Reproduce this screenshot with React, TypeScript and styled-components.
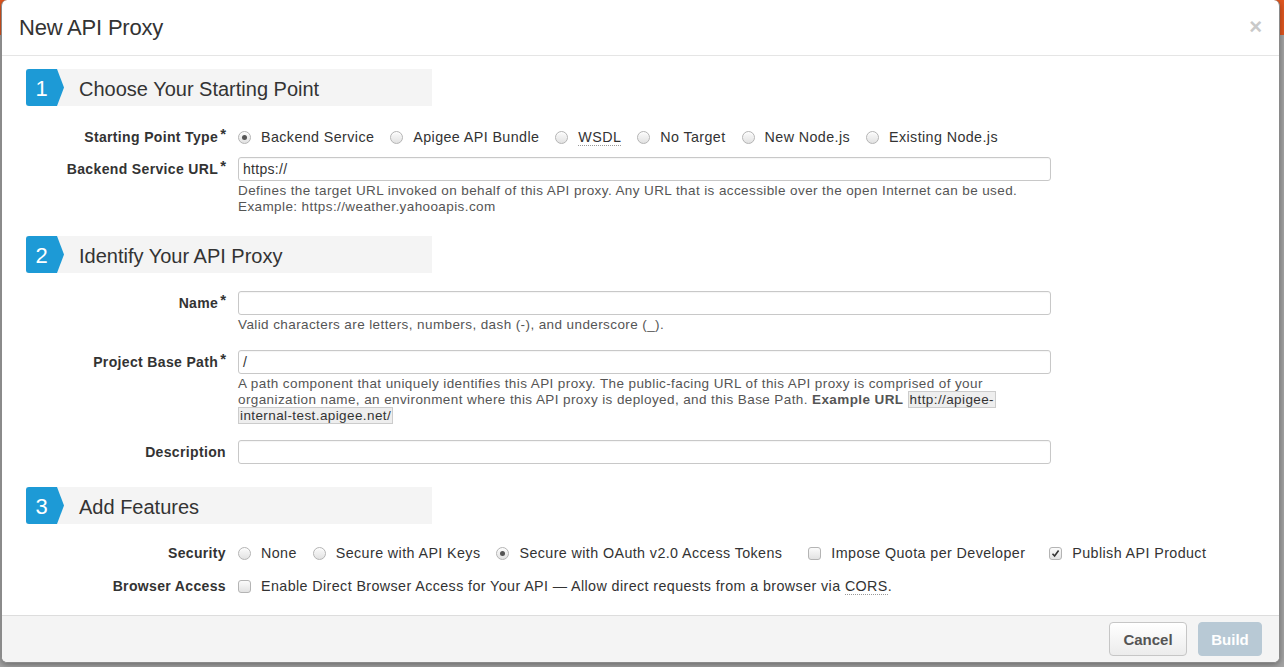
import React from "react";
import styled, { createGlobalStyle } from "styled-components";

const Global = createGlobalStyle`
  html, body { margin: 0; padding: 0; }
  body {
    font-family: "Liberation Sans", Arial, Helvetica, sans-serif;
    color: #333;
    background: #9d9d9d;
  }
`;

const Backdrop = styled.div`
  width: 1284px;
  height: 667px;
  padding-left: 1px;
  box-sizing: border-box;
  background: linear-gradient(#e0561f 0, #e0561f 35px, #a4a4a4 35px);
  overflow: hidden;
`;

const Modal = styled.div`
  width: 1279px;
  height: 663px;
  box-sizing: border-box;
  background: #fff;
  border: 1px solid #8a8a8a;
  border-top: none;
  border-radius: 6px;
  box-shadow: 0 2px 6px rgba(0, 0, 0, 0.35);
  display: flex;
  flex-direction: column;
  overflow: hidden;
`;

const Header = styled.div`
  height: 55px;
  flex: none;
  border-bottom: 1px solid #e5e5e5;
  display: flex;
  align-items: center;
  justify-content: space-between;
  padding: 0 17px 0 17px;
`;

const Title = styled.h3`
  margin: 0;
  font-size: 22px;
  font-weight: normal;
  color: #333;
  letter-spacing: -0.2px;
`;

const Close = styled.span`
  font-size: 22px;
  font-weight: bold;
  color: #c9c9c9;
  line-height: 1;
  margin-top: -2px;
`;

const Body = styled.div`
  flex: 1;
  padding: 13px 24px 0;
`;

const SectionHeader = styled.div<{ $mb: number }>`
  width: 406px;
  height: 37px;
  background: #f4f4f4;
  display: flex;
  align-items: center;
  margin-bottom: ${(p) => p.$mb}px;
`;

const Badge = styled.div`
  width: 38px;
  height: 37px;
  background: #1d9ad6;
  color: #fff;
  font-size: 22px;
  line-height: 35px;
  padding-top: 2px;
  box-sizing: border-box;
  padding-right: 7px;
  text-align: center;
  border-radius: 3px 0 0 3px;
  clip-path: polygon(0 0, 31px 0, 38px 50%, 31px 100%, 0 100%);
`;

const SectionTitle = styled.span`
  margin: 3px 0 0 15px;
  font-size: 20px;
  color: #333;
`;

const Row = styled.div<{ $mb: number; $h?: number }>`
  display: grid;
  grid-template-columns: 200px 813px;
  column-gap: 12px;
  margin-bottom: ${(p) => p.$mb}px;
  min-height: ${(p) => p.$h ?? 24}px;
`;

const Label = styled.label<{ $center?: boolean }>`
  font-size: 14px;
  font-weight: bold;
  letter-spacing: 0.35px;
  color: #333;
  text-align: right;
  line-height: ${(p) => (p.$center ? "26px" : "24px")};
  white-space: nowrap;
`;

const Req = styled.span`
  display: inline-block;
  margin-left: 2px;
  font-size: 15px;
  line-height: 1;
  letter-spacing: 0;
  vertical-align: 3px;
`;

const Options = styled.div`
  display: flex;
  align-items: center;
  height: 26px;
`;

const Option = styled.label<{ $gap: number }>`
  display: flex;
  align-items: center;
  font-size: 14.3px;
  letter-spacing: 0.4px;
  color: #333;
  margin-right: ${(p) => p.$gap}px;
  white-space: nowrap;
`;

const RadioMark = styled.span<{ $on?: boolean }>`
  width: 13px;
  height: 13px;
  box-sizing: border-box;
  border-radius: 50%;
  border: 1px solid #b4b4b4;
  background: linear-gradient(#fbfbfb, #e2e2e2);
  box-shadow: inset 0 1px 1px rgba(255, 255, 255, 0.8);
  margin-right: 10px;
  display: flex;
  align-items: center;
  justify-content: center;
  &::after {
    content: "";
    display: ${(p) => (p.$on ? "block" : "none")};
    width: 5px;
    height: 5px;
    border-radius: 50%;
    background: #555;
  }
`;

const CheckMark = styled.span`
  width: 13px;
  height: 13px;
  box-sizing: border-box;
  border-radius: 3px;
  border: 1px solid #b4b4b4;
  background: linear-gradient(#fbfbfb, #e2e2e2);
  margin-right: 10px;
  display: flex;
  align-items: center;
  justify-content: center;
`;

const Abbr = styled.span`
  border-bottom: 1px dotted #999;
`;

const Field = styled.div`
  display: flex;
  flex-direction: column;
`;

const Input = styled.div`
  height: 24px;
  box-sizing: border-box;
  border: 1px solid #c8c8c8;
  border-radius: 3px;
  padding: 0 4px;
  font-size: 14px;
  letter-spacing: 0.3px;
  line-height: 22px;
  color: #333;
  box-shadow: inset 0 1px 1px rgba(0, 0, 0, 0.04);
`;

const Help = styled.div`
  margin-top: 2px;
  font-size: 13.5px;
  letter-spacing: 0.4px;
  line-height: 16px;
  color: #555;
  white-space: nowrap;
`;

const Code = styled.span`
  background: #eee;
  border: 1px solid #ccc;
  padding: 0 1px;
  color: #333;
  -webkit-box-decoration-break: clone;
  box-decoration-break: clone;
`;

const Footer = styled.div`
  height: 46px;
  flex: none;
  border-top: 1px solid #ddd;
  background: #f4f4f4;
  display: flex;
  align-items: center;
  justify-content: flex-end;
  gap: 11px;
  padding-right: 17px;
`;

const Button = styled.button<{ $primary?: boolean }>`
  height: 34px;
  box-sizing: border-box;
  border-radius: 4px;
  font-family: "Liberation Sans", Arial, sans-serif;
  font-size: 15px;
  font-weight: bold;
  padding: 0;
  width: ${(p) => (p.$primary ? 64 : 78)}px;
  color: ${(p) => (p.$primary ? "#fff" : "#555")};
  border: 1px solid ${(p) => (p.$primary ? "#b8c9d5" : "#c6c6c6")};
  background: ${(p) =>
    p.$primary ? "#b8c9d5" : "linear-gradient(#ffffff, #ececec)"};
`;

const Check = () => (
  <svg width="9" height="9" viewBox="0 0 9 9">
    <path d="M1.5 4.8 L3.6 7 L7.6 1.5" fill="none" stroke="#333" strokeWidth="1.6" />
  </svg>
);

const Radio = ({ on, label, gap }: { on?: boolean; label: React.ReactNode; gap: number }) => (
  <Option $gap={gap}>
    <RadioMark $on={on} />
    {label}
  </Option>
);

const Box = ({ on, label, gap }: { on?: boolean; label: React.ReactNode; gap: number }) => (
  <Option $gap={gap}>
    <CheckMark>{on && <Check />}</CheckMark>
    {label}
  </Option>
);

const Section = ({ n, title, mb }: { n: number; title: string; mb: number }) => (
  <SectionHeader $mb={mb}>
    <Badge>{n}</Badge>
    <SectionTitle>{title}</SectionTitle>
  </SectionHeader>
);

export default function App() {
  return (
    <>
      <Global />
      <Backdrop>
        <Modal>
          <Header>
            <Title>New API Proxy</Title>
            <Close>×</Close>
          </Header>
          <Body>
            <Section n={1} title="Choose Your Starting Point" mb={18} />
            <Row $mb={7} $h={26}>
              <Label $center>
                Starting Point Type<Req>*</Req>
              </Label>
              <Options>
                <Radio on label="Backend Service" gap={16} />
                <Radio label="Apigee API Bundle" gap={16} />
                <Radio label={<Abbr>WSDL</Abbr>} gap={16} />
                <Radio label="No Target" gap={16} />
                <Radio label="New Node.js" gap={16} />
                <Radio label="Existing Node.js" gap={0} />
              </Options>
            </Row>
            <Row $mb={21}>
              <Label>
                Backend Service URL<Req>*</Req>
              </Label>
              <Field>
                <Input>https://</Input>
                <Help>
                  Defines the target URL invoked on behalf of this API proxy. Any URL that is
                  accessible over the open Internet can be used.
                  <br />
                  Example: https://weather.yahooapis.com
                </Help>
              </Field>
            </Row>

            <Section n={2} title="Identify Your API Proxy" mb={18} />
            <Row $mb={17}>
              <Label>
                Name<Req>*</Req>
              </Label>
              <Field>
                <Input />
                <Help>Valid characters are letters, numbers, dash (-), and underscore (_).</Help>
              </Field>
            </Row>
            <Row $mb={16}>
              <Label>
                Project Base Path<Req>*</Req>
              </Label>
              <Field>
                <Input>/</Input>
                <Help>
                  A path component that uniquely identifies this API proxy. The public-facing URL
                  of this API proxy is comprised of your
                  <br />
                  organization name, an environment where this API proxy is deployed, and this
                  Base Path. <b>Example URL</b>{" "}
                  <Code>
                    http://apigee-
                    <br />
                    internal-test.apigee.net/
                  </Code>
                </Help>
              </Field>
            </Row>
            <Row $mb={23}>
              <Label>Description</Label>
              <Field>
                <Input />
              </Field>
            </Row>

            <Section n={3} title="Add Features" mb={16} />
            <Row $mb={7} $h={26}>
              <Label $center>Security</Label>
              <Options>
                <Radio label="None" gap={16} />
                <Radio label="Secure with API Keys" gap={16} />
                <Radio on label="Secure with OAuth v2.0 Access Tokens" gap={26} />
                <Box label="Impose Quota per Developer" gap={24} />
                <Box on label="Publish API Product" gap={0} />
              </Options>
            </Row>
            <Row $mb={0} $h={26}>
              <Label $center>Browser Access</Label>
              <Options>
                <Box
                  label={
                    <span>
                      Enable Direct Browser Access for Your API — Allow direct requests from a
                      browser via <Abbr>CORS</Abbr>.
                    </span>
                  }
                  gap={0}
                />
              </Options>
            </Row>
          </Body>
          <Footer>
            <Button>Cancel</Button>
            <Button $primary>Build</Button>
          </Footer>
        </Modal>
      </Backdrop>
    </>
  );
}
